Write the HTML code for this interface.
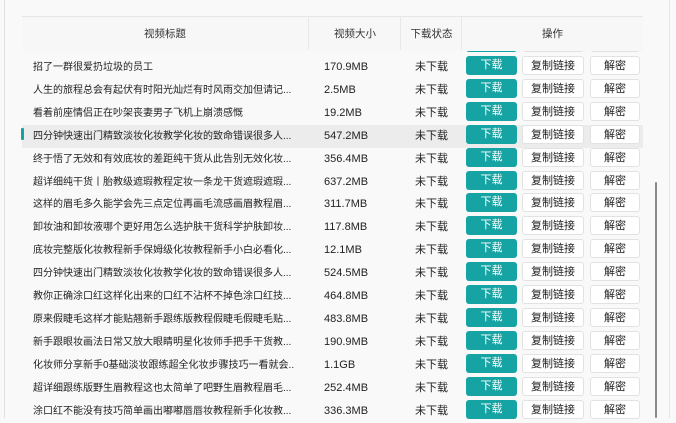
<!DOCTYPE html><html><head><meta charset="utf-8"><style>
body{margin:0;width:676px;height:418px;overflow:hidden;background:#f9f9f9;font-family:"Liberation Sans","Noto Sans CJK SC",sans-serif;font-size:11px;color:#222;position:relative}
.hdr{position:absolute;left:22px;top:16px;width:621px;height:34px;border-top:1px solid #e6e6e6;background:#f7f7f7}
.hdr div{position:absolute;top:0;height:34px;line-height:34px;text-align:center;color:#333;font-size:10.5px}
.sep{position:absolute;top:16px;width:1px;height:34px;background:#e8e8e8}
.row{position:absolute;left:22px;width:621px;height:23px;line-height:23px}
.row span{position:absolute;top:0}
.t{left:11px;width:262px;white-space:nowrap;overflow:hidden;font-size:10px}
.s{left:302px}
.st{left:393px}
.b{position:absolute;top:2px;height:19px;line-height:19px;text-align:center;border-radius:3px;font-size:11px}
.d{left:444px;width:51px;background:#16a3a3;color:#fff}
.c{left:500px;width:62px;background:#fff;border:1px solid #e2e2e2;box-sizing:border-box;color:#222}
.m{left:568px;width:50px;background:#fff;border:1px solid #e2e2e2;box-sizing:border-box;color:#222}
.hl{background:#ececec}
</style></head><body>
<div style="position:absolute;left:4px;top:0;width:1px;height:418px;background:#e0e0e0"></div>
<div style="position:absolute;left:669px;top:0;width:1px;height:418px;background:#e6e6e6"></div>
<div class="row" style="top:33px"><span class="b d"></span><span class="b c"></span><span class="b m"></span></div>
<div class="hdr" style="z-index:2"><div style="left:0;width:286px">视频标题</div><div style="left:287px;width:92px">视频大小</div><div style="left:379px;width:61px">下载状态</div><div style="left:440px;width:181px">操作</div></div>
<div class="sep" style="left:308px;z-index:3"></div><div class="sep" style="left:400px;z-index:3"></div><div class="sep" style="left:461px;z-index:3"></div>
<div id="rows"></div>
<div style="position:absolute;left:655px;top:182px;width:2px;height:236px;background:#8a8a8a;border-radius:1px"></div>
<div style="position:absolute;left:21px;top:128px;width:3px;height:12px;background:#16a3a3;border-radius:1px"></div>
<script>
var d=[["招了一群很爱扔垃圾的员工","170.9MB"],["人生的旅程总会有起伏有时阳光灿烂有时风雨交加但请记...","2.5MB"],["看着前座情侣正在吵架丧妻男子飞机上崩溃感慨","19.2MB"],["四分钟快速出门精致淡妆化妆教学化妆的致命错误很多人...","547.2MB"],["终于悟了无效和有效底妆的差距纯干货从此告别无效化妆...","356.4MB"],["超详细纯干货丨胎教级遮瑕教程定妆一条龙干货遮瑕遮瑕...","637.2MB"],["这样的眉毛多久能学会先三点定位再画毛流感画眉教程眉...","311.7MB"],["卸妆油和卸妆液哪个更好用怎么选护肤干货科学护肤卸妆...","117.8MB"],["底妆完整版化妆教程新手保姆级化妆教程新手小白必看化...","12.1MB"],["四分钟快速出门精致淡妆化妆教学化妆的致命错误很多人...","524.5MB"],["教你正确涂口红这样化出来的口红不沾杯不掉色涂口红技...","464.8MB"],["原来假睫毛这样才能贴翘新手跟练版教程假睫毛假睫毛贴...","483.8MB"],["新手跟眼妆画法日常又放大眼睛明星化妆师手把手干货教...","190.9MB"],["化妆师分享新手0基础淡妆跟练超全化妆步骤技巧一看就会...","1.1GB"],["超详细跟练版野生眉教程这也太简单了吧野生眉教程眉毛...","252.4MB"],["涂口红不能没有技巧简单画出嘟嘟唇唇妆教程新手化妆教...","336.3MB"]];
var h="";d.forEach(function(r,i){var top=56+i*22.9;h+='<div class="row'+(i==3?' hl':'')+'" style="top:'+top+'px"><span class="t">'+r[0]+'</span><span class="s">'+r[1]+'</span><span class="st">未下载</span><span class="b d">下载</span><span class="b c">复制链接</span><span class="b m">解密</span></div>';});
document.getElementById("rows").innerHTML=h;
</script>
</body></html>
